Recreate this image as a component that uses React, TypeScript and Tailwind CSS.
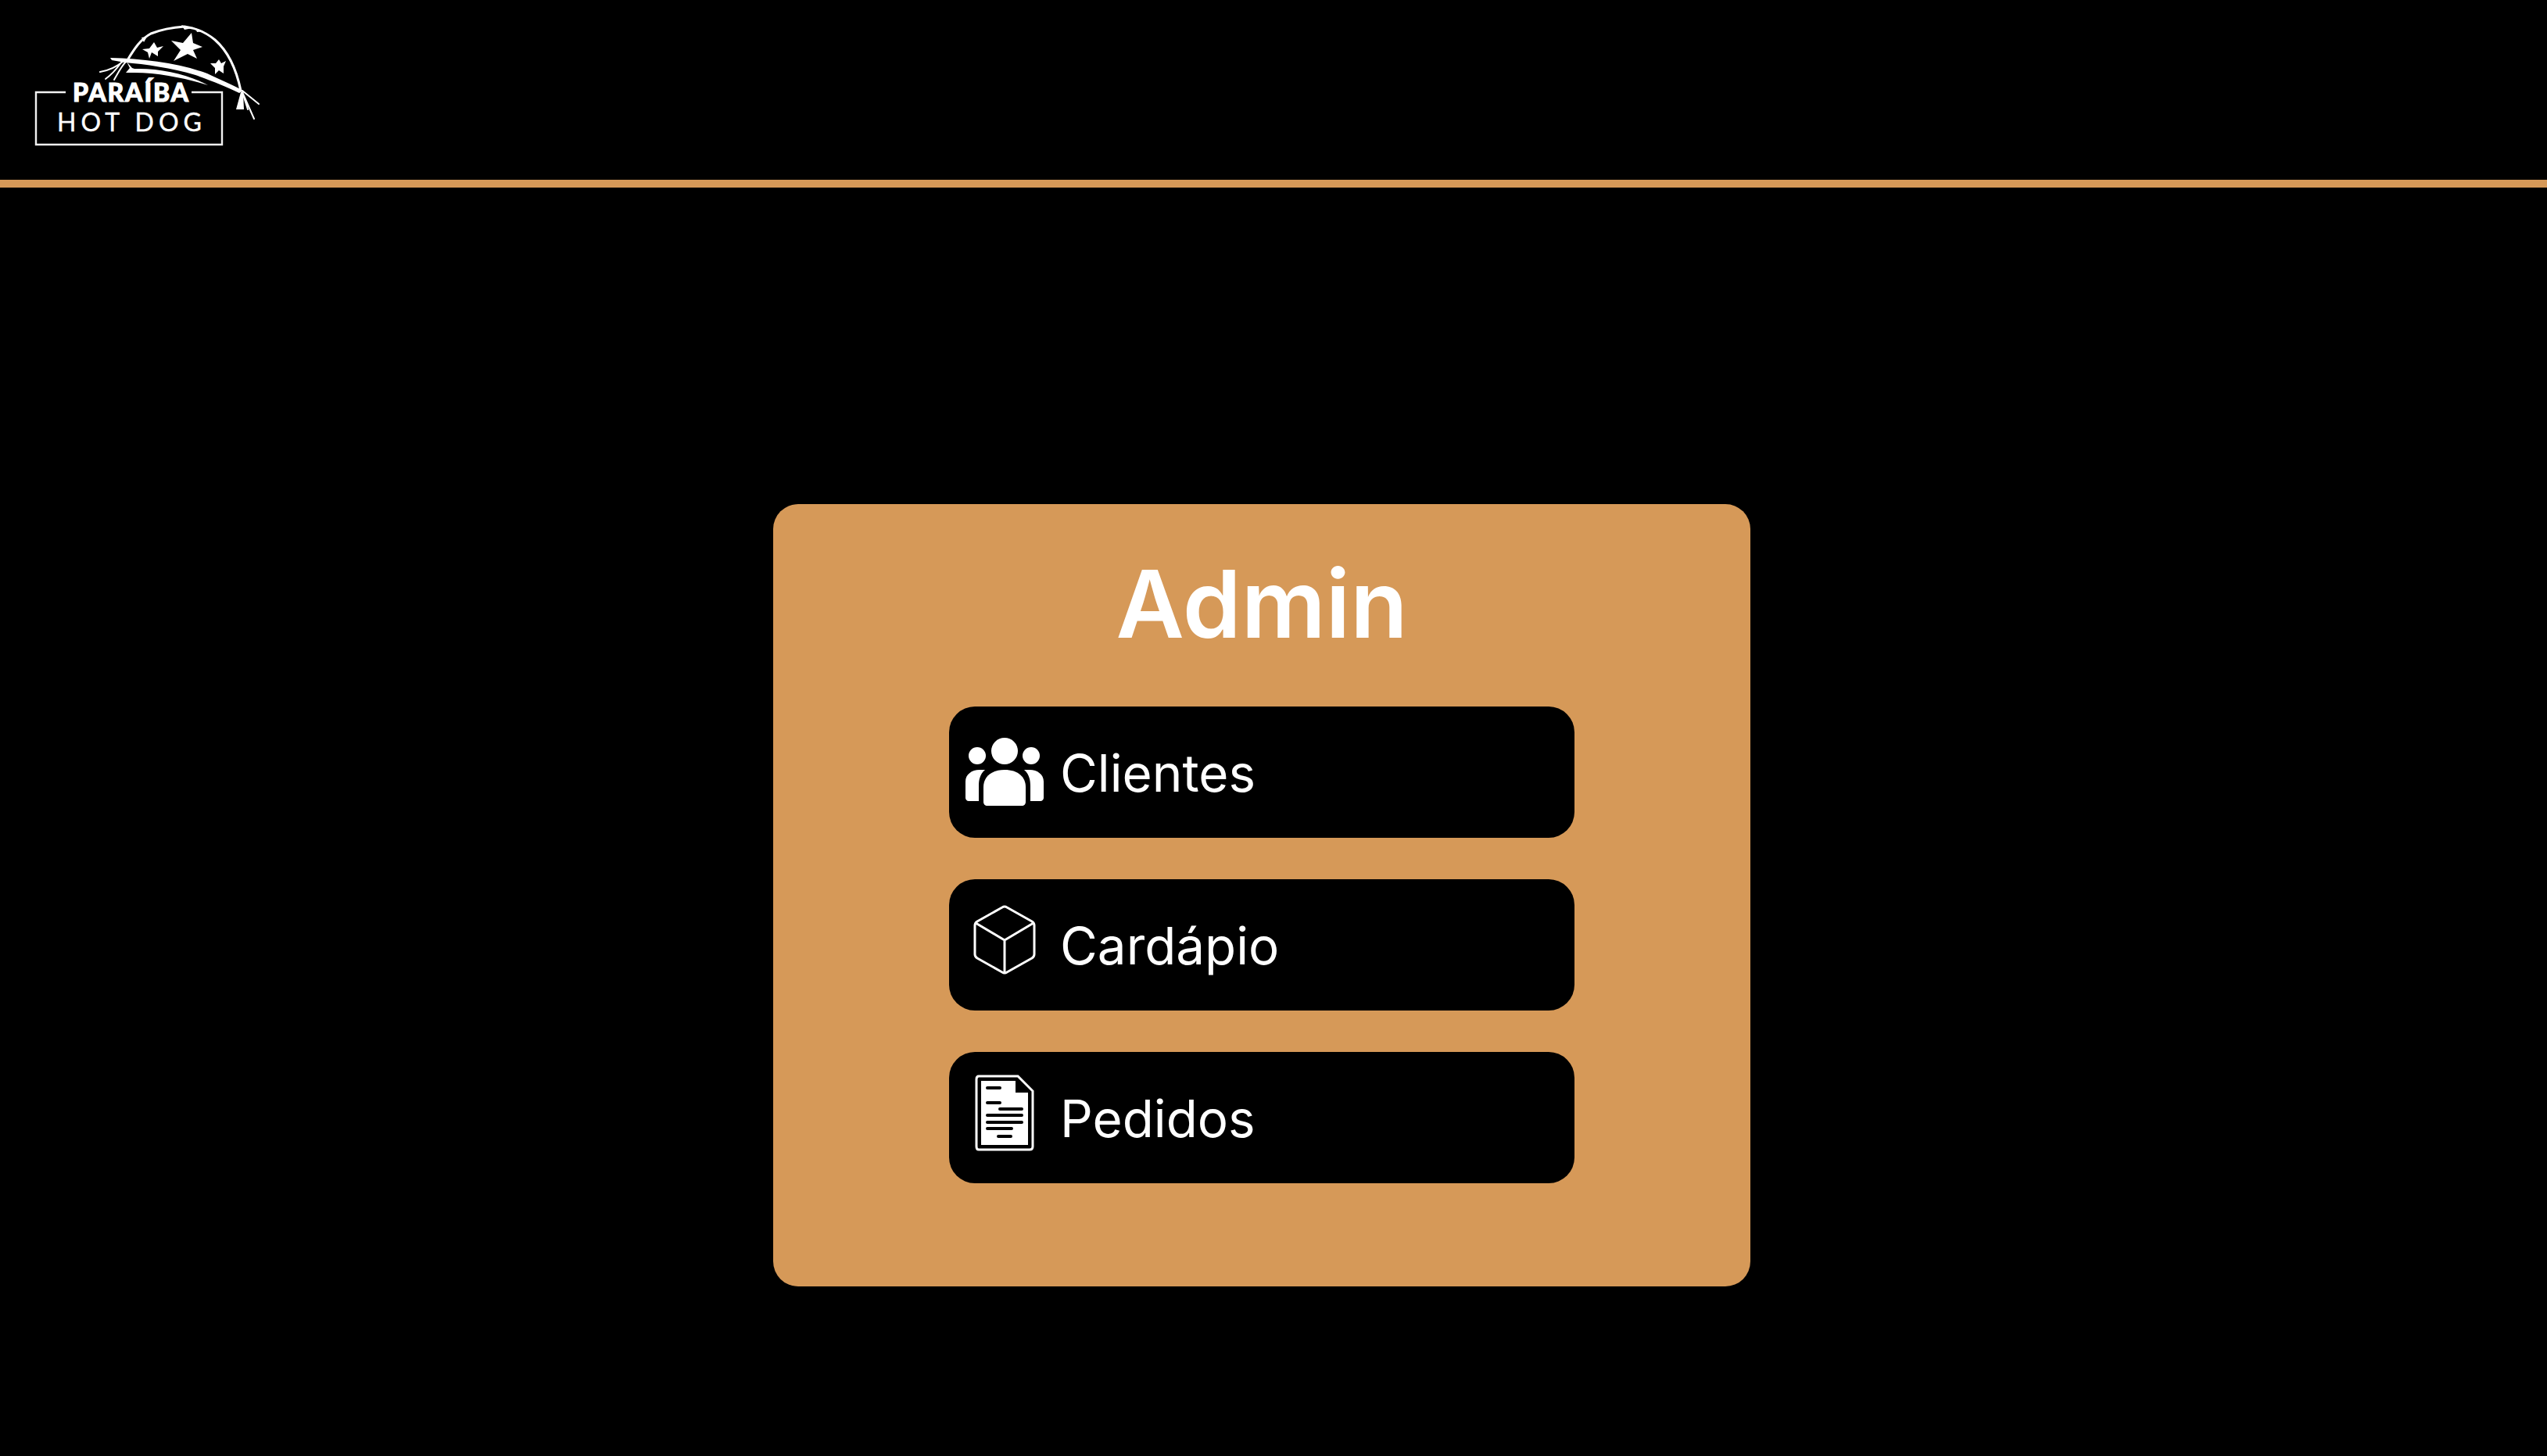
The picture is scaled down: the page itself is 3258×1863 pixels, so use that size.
import React from "react";

function Logo() {
  return (
    <svg width="340" height="200" viewBox="0 0 340 200" className="block">
      {/* arc */}
      <path d="M163 77C172 62 180 50 193 43C208 37 222 35 236 34C252 36 263 41 275 51C291 65 302 87 308 116" fill="none" stroke="#fff" strokeWidth="3" strokeLinecap="round" />
      <path d="M232 32L246 36L236 38ZM250 36L260 40L252 41ZM181 48L188 47L184 54Z" fill="#fff" />
      {/* branches */}
      <path d="M141 74C185 75 230 81 265 94C280 101 298 109 311 116L306 119C290 111 270 103 250 96C220 87 185 82 160 80L143 77Z" fill="#fff" />
      <path d="M162 79L169 87L172 88C205 87 240 95 266 109C240 101 205 93 172 93L161 93L166 87Z" fill="#fff" />
      {/* strands, left */}
      <path d="M158 78C150 85 140 90 128 92M155 80C150 87 146 93 135 101M161 79C155 85 152 92 146 102" fill="none" stroke="#fff" strokeWidth="2" strokeLinecap="round" />
      {/* strands, right */}
      <path d="M310 116L331 133M310 118L325 152M310 118L317 140" fill="none" stroke="#fff" strokeWidth="2" strokeLinecap="round" />
      <path d="M308 118L302 140L312 140L311 118Z" fill="#fff" />
      {/* stars */}
      <path d="M197 54L201 61L209 59L202 66L202 72L194 67L191 75L189 67L182 63L191 62Z" fill="#fff" />
      <path d="M245 42L247 55L259 60L247 64L252 75L240 69L222 78L231 64L219 52L234 55Z" fill="#fff" />
      <path d="M280 76L283 81L289 78L286 85L286 94L280 90L275 95L275 87L269 81L276 81Z" fill="#fff" />
      {/* frame */}
      <path d="M84 118H46V185H284V118H245" fill="none" stroke="#f2f2f2" strokeWidth="2.4" />
      <text x="93" y="130" textLength="148" lengthAdjust="spacing" fill="#fff" stroke="#fff" strokeWidth="1" fontFamily="Lato, sans-serif" fontWeight="900" fontSize="32">PARAÍBA</text>
      <text x="73" y="168" textLength="185" lengthAdjust="spacing" fill="#fff" stroke="#fff" strokeWidth="0.4" fontFamily="Lato, sans-serif" fontWeight="400" fontSize="32">HOT DOG</text>
    </svg>
  );
}

function UsersIcon() {
  return (
    <svg width="100" height="88" viewBox="0 0 100 88" fill="#fff">
      <circle cx="50" cy="17" r="17" />
      <circle cx="15" cy="23" r="11" />
      <circle cx="84" cy="23" r="11" />
      <path d="M23 63C23 50 33 41 50 41C67 41 77 50 77 63V82C77 85 75 87 72 87H28C25 87 23 85 23 82Z" />
      <path d="M25 41C18 47 17 55 17 62V81H4C2 81 0 79 0 77V56C0 47 8 41 18 41Z" />
      <path d="M75 41C82 47 83 55 83 62V81H96C98 81 100 79 100 77V56C100 47 92 41 82 41Z" />
    </svg>
  );
}

function BoxIcon() {
  return (
    <svg width="80" height="90" viewBox="0 0 80 90" fill="none" stroke="#fff" strokeWidth="3" strokeLinejoin="round" className="mb-[12px]">
      <path d="M37 3Q40 1 43 3L75 21Q78 23 78 26V63Q78 66 75 68L43 86Q40 88 37 86L5 68Q2 66 2 63V26Q2 23 5 21Z" />
      <path d="M3 23L40 45L77 23M40 45V87" />
    </svg>
  );
}

function DocIcon() {
  return (
    <svg width="76" height="98" viewBox="0 0 76 98" className="mb-[12px]">
      <path d="M5 2H55L74 21V92Q74 96 70 96H5Q2 96 2 92V6Q2 2 5 2Z" fill="none" stroke="#fff" strokeWidth="3" />
      <path d="M8 8H52V23H68V90H8Z" fill="#fff" />
      <path d="M16 17H32M16 36H32M32 44H60M16 52H60M16 61H60M16 69H47M30 79H46" stroke="#000" strokeWidth="4" strokeLinecap="round" />
    </svg>
  );
}

function MenuButton({ icon, label }: { icon: React.ReactNode; label: string }) {
  return (
    <button className="flex items-center w-[800px] h-[168px] bg-black rounded-[33px] pl-[21px]">
      <span className="flex items-center justify-center w-[100px]">{icon}</span>
      <span className="ml-[21px] mt-[3px] text-[65.5px] leading-none text-white">{label}</span>
    </button>
  );
}

export default function App() {
  return (
    <div className="min-h-[1863px] bg-black font-['Inter',sans-serif]">
      <header className="h-[240px] border-b-[10px] border-[#d69958]">
        <Logo />
      </header>
      <main className="ml-[989px] mt-[405px] w-[1250px] h-[1001px] bg-[#d69958] rounded-[32px] flex flex-col items-center pt-[68px]">
        <h1 className="text-[120px] leading-[120px] font-semibold text-white">Admin</h1>
        <div className="mt-[71px] flex flex-col gap-[53px]">
          <MenuButton icon={<UsersIcon />} label="Clientes" />
          <MenuButton icon={<BoxIcon />} label="Cardápio" />
          <MenuButton icon={<DocIcon />} label="Pedidos" />
        </div>
      </main>
    </div>
  );
}
